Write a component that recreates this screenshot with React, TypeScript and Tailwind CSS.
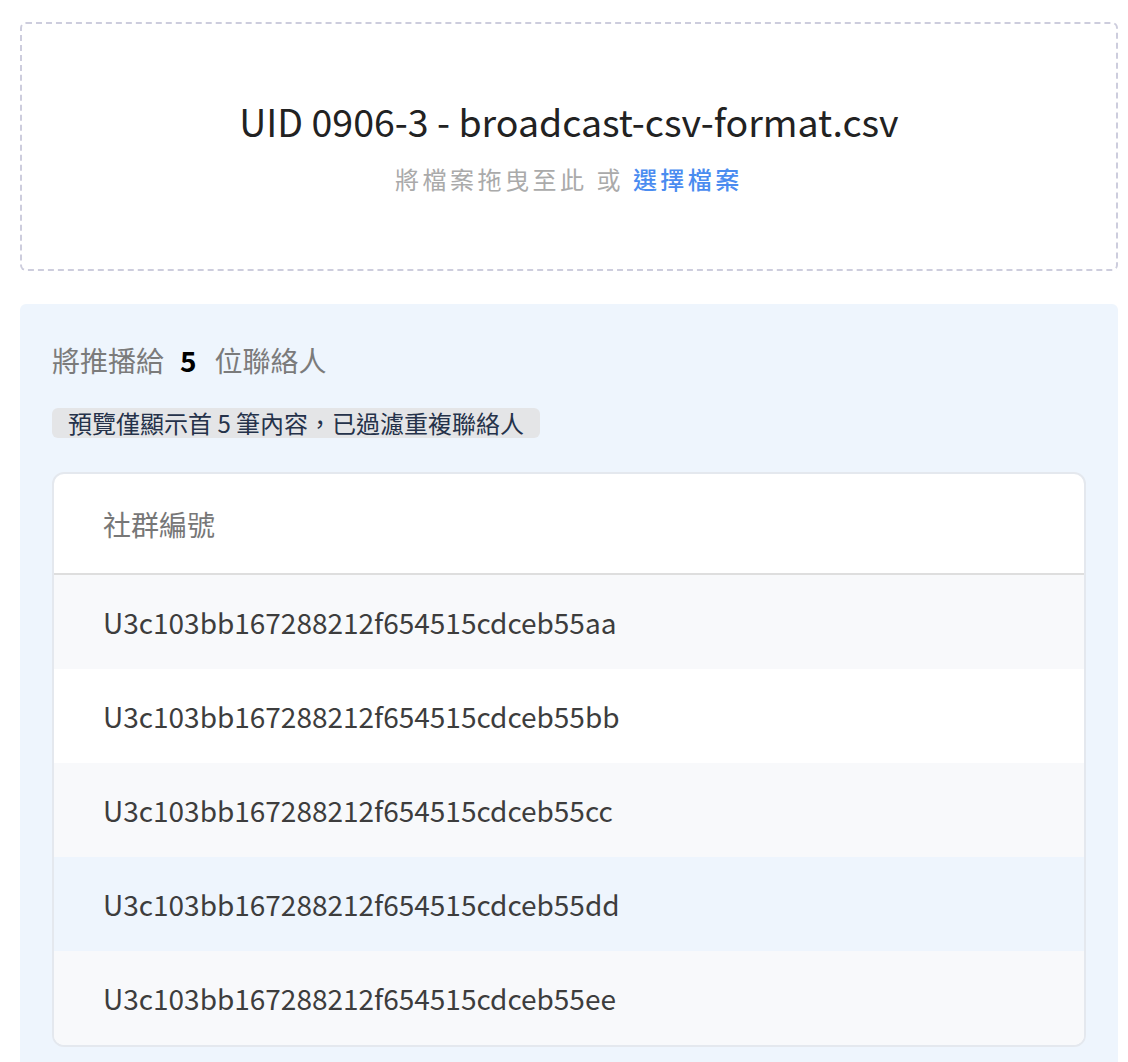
const FONT = "font-['Noto_Sans_CJK_TC','Noto_Sans',sans-serif]";

const ROWS = [
  { id: 'U3c103bb167288212f654515cdceb55aa', bg: 'bg-[#f8f9fb]' },
  { id: 'U3c103bb167288212f654515cdceb55bb', bg: 'bg-white' },
  { id: 'U3c103bb167288212f654515cdceb55cc', bg: 'bg-[#f8f9fb]' },
  { id: 'U3c103bb167288212f654515cdceb55dd', bg: 'bg-[#eef5fd]' },
  { id: 'U3c103bb167288212f654515cdceb55ee', bg: 'bg-[#f8f9fb]' },
];

export default function App() {
  return (
    <div className={`${FONT} min-h-screen bg-white pl-5 pr-[10px] pt-[22px]`}>
      {/* Upload drop zone */}
      <div className="flex h-[249px] flex-col items-center justify-center rounded-md border-2 border-dashed border-[#cdcddd]">
        <div className="text-[37.5px] leading-[44px] text-[#222]">
          UID 0906-3 - broadcast-csv-format.csv
        </div>
        <div className="mt-[20px] text-[24px] leading-[32px] tracking-[3.5px] text-[#aaaaaa]">
          將檔案拖曳至此 或 <span className="font-medium text-[#4a8cf0]">選擇檔案</span>
        </div>
      </div>

      {/* Preview panel */}
      <div className="mt-[33px] rounded-t-md bg-[#eef5fd] px-8 pb-10 pt-[36px]">
        <div className="flex items-center text-[28px] leading-[40px] text-[#7b7b7b]">
          <span>將推播給</span>
          <span className="ml-4 mr-[18px] font-semibold text-black">5</span>
          <span>位聯絡人</span>
        </div>
        <div className="mt-[28px] inline-block rounded-md bg-[#e4e5e7] px-4 text-[24px] leading-[30px] text-[#25324a]">
          預覽僅顯示首 5 筆內容，已過濾重複聯絡人
        </div>

        <div className="mt-[34px] overflow-hidden rounded-xl border-2 border-[#e4e8ee] bg-white">
          <div className="flex h-[101px] items-center border-b-2 border-[#dedede] pl-[49px] text-[28px] text-[#777]">
            社群編號
          </div>
          {ROWS.map((row) => (
            <div
              key={row.id}
              className={`flex h-[94px] items-center pl-[49px] text-[28px] text-[#3d3d3d] ${row.bg}`}
            >
              {row.id}
            </div>
          ))}
        </div>
      </div>
    </div>
  );
}
